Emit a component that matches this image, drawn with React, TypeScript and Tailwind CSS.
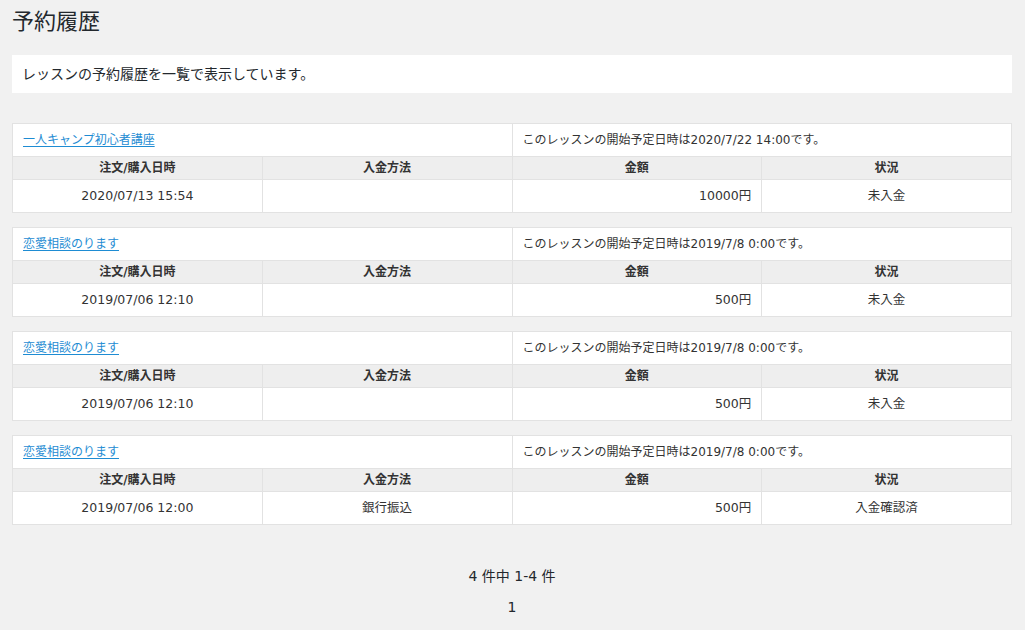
import React from "react";

type Reservation = {
  lesson: string;
  start: string;
  ordered: string;
  method: string;
  amount: string;
  status: string;
};

const reservations: Reservation[] = [
  {
    lesson: "一人キャンプ初心者講座",
    start: "2020/7/22 14:00",
    ordered: "2020/07/13 15:54",
    method: "",
    amount: "10000円",
    status: "未入金",
  },
  {
    lesson: "恋愛相談のります",
    start: "2019/7/8 0:00",
    ordered: "2019/07/06 12:10",
    method: "",
    amount: "500円",
    status: "未入金",
  },
  {
    lesson: "恋愛相談のります",
    start: "2019/7/8 0:00",
    ordered: "2019/07/06 12:10",
    method: "",
    amount: "500円",
    status: "未入金",
  },
  {
    lesson: "恋愛相談のります",
    start: "2019/7/8 0:00",
    ordered: "2019/07/06 12:00",
    method: "銀行振込",
    amount: "500円",
    status: "入金確認済",
  },
];

function ReservationTable({ r }: { r: Reservation }) {
  return (
    <table className="w-full table-fixed border-collapse border border-[#e2e2e2] bg-white text-[12px] text-[#333]">
      <tbody>
        {/* Lesson row */}
        <tr className="h-[33px]">
          <td colSpan={2} className="border border-[#e2e2e2] px-[10px]">
            <a href="#" className="text-[#1e8cd3] underline underline-offset-2">
              {r.lesson}
            </a>
          </td>
          <td colSpan={2} className="border border-[#e2e2e2] px-[10px]">
            このレッスンの開始予定日時は{r.start}です。
          </td>
        </tr>
        {/* Header row */}
        <tr className="h-[23px] bg-[#eeeeee] font-bold">
          <th className="border border-[#e2e2e2] text-center">注文/購入日時</th>
          <th className="border border-[#e2e2e2] text-center">入金方法</th>
          <th className="border border-[#e2e2e2] text-center">金額</th>
          <th className="border border-[#e2e2e2] text-center">状況</th>
        </tr>
        {/* Data row */}
        <tr className="h-[33px] text-[12.5px]">
          <td className="border border-[#e2e2e2] text-center">{r.ordered}</td>
          <td className="border border-[#e2e2e2] text-center">{r.method}</td>
          <td className="border border-[#e2e2e2] px-[10px] text-right">{r.amount}</td>
          <td className="border border-[#e2e2e2] text-center">{r.status}</td>
        </tr>
      </tbody>
    </table>
  );
}

export default function App() {
  return (
    <div
      className="min-h-[630px] bg-[#f1f1f1] pl-3 pr-[13px] pt-[9px] text-[#23282d]"
      style={{ fontFamily: '"DejaVu Sans", "Noto Sans CJK JP", sans-serif' }}
    >
      <h1 className="text-[22px] leading-[26px]">予約履歴</h1>

      {/* Description */}
      <div className="mt-5 flex h-[38px] items-center bg-white px-[10px] text-[14px]">
        レッスンの予約履歴を一覧で表示しています。
      </div>

      {/* Reservations */}
      <div className="mt-[30px] flex flex-col gap-[14px]">
        {reservations.map((r, i) => (
          <ReservationTable key={i} r={r} />
        ))}
      </div>

      {/* Pagination */}
      <div className="mt-[41px] flex flex-col items-center gap-[10px] text-[14px] text-[#23282d]">
        <p>4 件中 1-4 件</p>
        <p>1</p>
      </div>
    </div>
  );
}
